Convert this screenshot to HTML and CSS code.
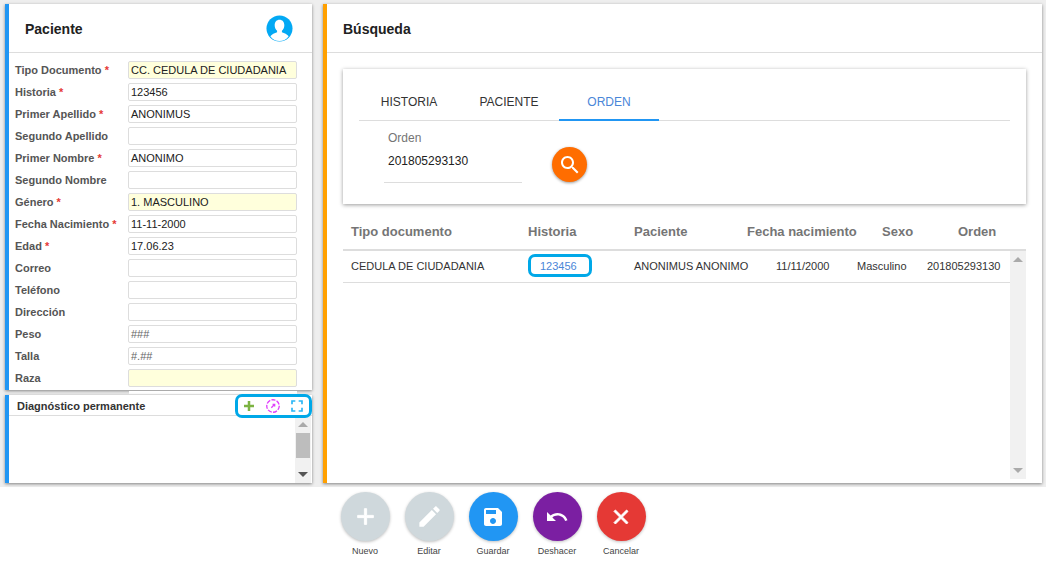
FILE: index.html
```html
<!DOCTYPE html>
<html lang="en">
<head>
  <meta charset="UTF-8">
  <meta name="viewport" content="width=device-width, initial-scale=1.0">
  <title>Búsqueda de paciente</title>
  <link rel="stylesheet" href="styles.css">
</head>
<body>
  <div class="workspace">
    <div class="left-col">
      <!-- Paciente -->
      <section class="panel panel-blue patient">
        <header class="panel-head">
          <h2>Paciente</h2>
          <svg class="avatar" viewBox="0 0 28 28">
            <circle cx="14" cy="14" r="13.5" fill="#03a9f4"/>
            <path d="M14 5c-3 0-5 2.300-5 5.500 0 2.500 1 4.600 2.500 5.800v1.500c-2.500 1-5.500 2-7 4.200C7 25.400 10.300 27 14 27s7-1.600 9.500-5c-1.500-2.200-4.500-3.200-7-4.200v-1.500c1.500-1.200 2.500-3.300 2.500-5.800C19 7.300 17 5 14 5z" fill="#fff"/>
          </svg>
        </header>
        <div class="fields">
          <div class="field"><label>Tipo Documento <b>*</b></label><div class="value req">CC. CEDULA DE CIUDADANIA</div></div>
          <div class="field"><label>Historia <b>*</b></label><div class="value">123456</div></div>
          <div class="field"><label>Primer Apellido <b>*</b></label><div class="value">ANONIMUS</div></div>
          <div class="field"><label>Segundo Apellido</label><div class="value"></div></div>
          <div class="field"><label>Primer Nombre <b>*</b></label><div class="value">ANONIMO</div></div>
          <div class="field"><label>Segundo Nombre</label><div class="value"></div></div>
          <div class="field"><label>Género <b>*</b></label><div class="value req">1. MASCULINO</div></div>
          <div class="field"><label>Fecha Nacimiento <b>*</b></label><div class="value">11-11-2000</div></div>
          <div class="field"><label>Edad <b>*</b></label><div class="value">17.06.23</div></div>
          <div class="field"><label>Correo</label><div class="value"></div></div>
          <div class="field"><label>Teléfono</label><div class="value"></div></div>
          <div class="field"><label>Dirección</label><div class="value"></div></div>
          <div class="field"><label>Peso</label><div class="value mask">###</div></div>
          <div class="field"><label>Talla</label><div class="value mask">#.##</div></div>
          <div class="field"><label>Raza</label><div class="value req"></div></div>
        </div>
      </section>
      <div class="panel-gap"><span></span></div>
      <!-- Diagnostico -->
      <section class="panel panel-blue diag">
        <header class="diag-head">
          <h3>Diagnóstico permanente</h3>
          <div class="diag-tools">
            <svg viewBox="0 0 24 24" class="tool-add"><path d="M18 13.500h-4.500V18h-3v-4.500H6v-3h4.500V6h3v4.500H18z"/></svg>
            <svg viewBox="0 0 24 24" class="tool-hist"><circle cx="12" cy="12" r="7.500" stroke-dasharray="5 1.500"/><path d="M10 14l4-4M11.500 10H14v2.500"/></svg>
            <svg viewBox="0 0 24 24" class="tool-full"><path d="M7 14H5v5h5v-2H7v-3zm-2-4h2V7h3V5H5v5zm12 7h-3v2h5v-5h-2v3zM14 5v2h3v3h2V5h-5z"/></svg>
          </div>
          <div class="callout callout-tools"></div>
        </header>
        <div class="diag-body">
          <div class="scrollbar">
            <i class="arrow-up"></i>
            <div class="thumb"></div>
            <i class="arrow-down"></i>
          </div>
        </div>
      </section>
    </div>

    <!-- Busqueda -->
    <section class="panel panel-orange search">
      <header class="panel-head">
        <h2>Búsqueda</h2>
      </header>
      <div class="search-body">
        <div class="card">
          <div class="tabs">
            <a class="tab">HISTORIA</a>
            <a class="tab">PACIENTE</a>
            <a class="tab active">ORDEN</a>
          </div>
          <div class="search-row">
            <div class="text-field">
              <label>Orden</label>
              <div class="text-value">201805293130</div>
            </div>
            <button class="search-btn">
              <svg viewBox="0 0 24 24"><path d="M15.500 14h-.79l-.28-.27C15.410 12.590 16 11.110 16 9.500 16 5.910 13.090 3 9.500 3S3 5.910 3 9.500 5.910 16 9.500 16c1.610 0 3.090-.59 4.230-1.570l.27.28v.79l5 4.990L20.490 19l-4.990-5zm-6 0C7.010 14 5 11.990 5 9.500S7.010 5 9.500 5 14 7.010 14 9.500 11.990 14 9.500 14z"/></svg>
            </button>
          </div>
        </div>
        <div class="results">
          <div class="results-head">
            <span class="h-tipo">Tipo documento</span>
            <span class="h-hist">Historia</span>
            <span class="h-pac">Paciente</span>
            <span class="h-fecha">Fecha nacimiento</span>
            <span class="h-sexo">Sexo</span>
            <span>Orden</span>
          </div>
          <div class="results-body">
            <div class="results-list">
              <div class="result-row">
                <span class="c-tipo">CEDULA DE CIUDADANIA</span>
                <span class="c-hist"><a>123456</a><i class="callout callout-link"></i></span>
                <span class="c-pac">ANONIMUS ANONIMO</span>
                <span class="c-fecha">11/11/2000</span>
                <span class="c-sexo">Masculino</span>
                <span>201805293130</span>
              </div>
            </div>
            <div class="scrollbar">
              <i class="arrow-up"></i>
              <i class="arrow-down"></i>
            </div>
          </div>
        </div>
      </div>
    </section>
  </div>

  <!-- Acciones -->
  <footer class="actions">
    <div class="action">
      <button class="fab fab-off"><svg viewBox="0 0 24 24"><path class="plus" d="M19 13h-6v6h-2v-6H5v-2h6V5h2v6h6v2z"/></svg></button>
      <span>Nuevo</span>
    </div>
    <div class="action">
      <button class="fab fab-off"><svg viewBox="0 0 24 24"><path d="M3 17.250V21h3.750L17.810 9.940l-3.750-3.750L3 17.250zM20.710 7.040c.39-.39.39-1.020 0-1.410l-2.340-2.340c-.39-.39-1.020-.39-1.410 0l-1.830 1.830 3.750 3.750 1.830-1.830z"/></svg></button>
      <span>Editar</span>
    </div>
    <div class="action">
      <button class="fab fab-save"><svg viewBox="0 0 24 24"><path d="M17 3H5c-1.110 0-2 .9-2 2v14c0 1.100.89 2 2 2h14c1.100 0 2-.9 2-2V7l-4-4zm-5 16c-1.660 0-3-1.340-3-3s1.340-3 3-3 3 1.340 3 3-1.340 3-3 3zm3-10H5V5h10v4z"/></svg></button>
      <span>Guardar</span>
    </div>
    <div class="action">
      <button class="fab fab-undo"><svg viewBox="0 0 24 24"><path d="M12.500 8c-2.650 0-5.050.99-6.900 2.600L2 7v9h9l-3.620-3.620c1.390-1.160 3.160-1.880 5.120-1.880 3.540 0 6.550 2.310 7.600 5.500l2.370-.78C21.080 11.030 17.150 8 12.500 8z"/></svg></button>
      <span>Deshacer</span>
    </div>
    <div class="action">
      <button class="fab fab-cancel"><svg viewBox="0 0 24 24"><path d="M19 6.410L17.590 5 12 10.590 6.410 5 5 6.410 10.590 12 5 17.590 6.410 19 12 13.410 17.590 19 19 17.590 13.410 12z"/></svg></button>
      <span>Cancelar</span>
    </div>
  </footer>
</body>
</html>
```

FILE: styles.css
```css
* {
  box-sizing: border-box;
}
html, body {
  margin: 0;
  padding: 0;
  height: 561px;
  overflow: hidden;
}
body {
  font-family: "Liberation Sans", Arial, sans-serif;
  background-color: #fff;
  color: #212121;
}
h2, h3 {
  margin: 0;
}
.workspace {
  display: flex;
  gap: 11px;
  height: 487px;
  padding: 4px 4px 4px 5px;
  background-color: #eee;
}
.left-col {
  width: 307px;
  display: flex;
  flex-direction: column;
}
.panel {
  background: #fff;
  box-shadow: 0 1px 3px rgba(0, 0, 0, 0.45);
}
.panel-blue {
  border-left: 4px solid #2196f3;
}
.panel-orange {
  border-left: 4px solid #ffa000;
}
.panel-head {
  height: 49px;
  padding-top: 1px;
  display: flex;
  align-items: center;
  justify-content: space-between;
  border-bottom: 1px solid #ddd;
}
.panel-head h2 {
  font-size: 14px;
  color: #212121;
}

/* Paciente */
.patient {
  height: 386px;
  overflow: hidden;
}
.patient .panel-head {
  padding: 0 19px 0 16px;
}
.patient h2 {
  padding-top: 1px;
}
.avatar {
  width: 27px;
  height: 27px;
}
.fields {
  padding: 8px 0 0 6px;
}
.field {
  display: flex;
  align-items: center;
  height: 18px;
  margin-bottom: 4px;
}
.field label {
  width: 113px;
  font-size: 11px;
  font-weight: bold;
  color: #555;
  white-space: nowrap;
}
.field label b {
  color: #e53935;
}
.value {
  width: 169px;
  height: 18px;
  padding-left: 2px;
  font-size: 11px;
  line-height: 16px;
  color: #212121;
  background: #fff;
  border: 1px solid #ddd;
  border-radius: 2px;
}
.value.req {
  background: #ffffdc;
}
.value.mask {
  color: #666;
}
.panel-gap {
  height: 5px;
  padding-left: 124px;
}
.panel-gap span {
  display: block;
  width: 168px;
  height: 3px;
  margin-top: 1px;
  background: #fff;
}

/* Diagnostico */
.diag {
  height: 88px;
  display: flex;
  flex-direction: column;
}
.diag-head {
  position: relative;
  height: 21px;
  padding: 1px 5px 0 8px;
  display: flex;
  align-items: center;
  justify-content: space-between;
  border-bottom: 1px solid #ddd;
}
.diag-head h3 {
  font-size: 11px;
  font-weight: bold;
  color: #333;
}
.diag-tools {
  display: flex;
  gap: 4px;
}
.diag-tools svg {
  display: block;
  width: 20px;
  height: 20px;
}
.tool-add {
  fill: #7cb342;
}
.tool-hist {
  fill: none;
  stroke: #e040fb;
  stroke-width: 1.6;
}
.tool-full {
  fill: #29b6f6;
}
.callout {
  position: absolute;
  border: 3px solid #00a8e8;
  border-radius: 7px;
}
.callout-tools {
  top: -1px;
  right: 0;
  width: 77px;
  height: 24px;
}
.diag-body {
  flex: 1;
  display: flex;
  justify-content: flex-end;
  padding-right: 1px;
}
.scrollbar {
  display: flex;
  flex-direction: column;
  align-items: center;
  justify-content: space-between;
  width: 16px;
  padding: 6px 0;
  background: #f1f1f1;
}
.thumb {
  width: 14px;
  height: 25px;
  margin-top: 6px;
  margin-bottom: auto;
  background: #bdbdbd;
}
.arrow-up, .arrow-down {
  width: 0;
  height: 0;
  border-left: 5px solid transparent;
  border-right: 5px solid transparent;
}
.arrow-up {
  border-bottom: 5px solid #aaa;
}
.arrow-down {
  border-top: 5px solid #555;
}
.results-body .arrow-down {
  border-top-color: #aaa;
}

/* Busqueda */
.search {
  flex: 1;
}
.search .panel-head {
  padding-left: 16px;
}
.search-body {
  padding: 16px 16px 0;
}
.card {
  height: 135px;
  padding: 16px 16px 0;
  background: #fff;
  box-shadow: 0 1px 4px rgba(0, 0, 0, 0.4);
}
.tabs {
  display: flex;
  height: 36px;
  border-bottom: 1px solid #ddd;
}
.tab {
  width: 100px;
  height: 36px;
  font-size: 12px;
  line-height: 34px;
  text-align: center;
  color: #333;
}
.tab.active {
  color: #4a86d8;
  border-bottom: 2px solid #2196f3;
}
.search-row {
  display: flex;
  padding-left: 25px;
}
.text-field {
  width: 138px;
  height: 62px;
  border-bottom: 1px solid #ddd;
  font-size: 12px;
}
.text-field label {
  display: block;
  margin: 10px 0 0 4px;
  color: #757575;
}
.text-value {
  margin: 9px 0 0 4px;
  color: #212121;
}
.search-btn {
  width: 35px;
  height: 35px;
  margin: 26px 0 0 30px;
  padding: 0;
  display: flex;
  align-items: center;
  justify-content: center;
  background: #ff6d00;
  border: none;
  border-radius: 50%;
  box-shadow: 0 1px 3px rgba(0, 0, 0, 0.4);
}
.search-btn svg {
  width: 24px;
  height: 24px;
  fill: #fff;
}
.results {
  margin-top: 11px;
}
.results-head {
  display: flex;
  align-items: center;
  height: 36px;
  padding-bottom: 2px;
  border-bottom: 2px solid #ddd;
  font-size: 13px;
  font-weight: bold;
  color: #757575;
}
.h-tipo {
  width: 185px;
  padding-left: 8px;
}
.h-hist {
  width: 106px;
}
.h-pac {
  width: 113px;
}
.h-fecha {
  width: 135px;
}
.h-sexo {
  width: 76px;
}
.results-body {
  display: flex;
  height: 228px;
}
.results-list {
  flex: 1;
}
.result-row {
  display: flex;
  align-items: center;
  height: 32px;
  padding-bottom: 2px;
  border-bottom: 1px solid #ddd;
  font-size: 11px;
  color: #333;
}
.c-tipo {
  width: 185px;
  padding-left: 8px;
}
.c-hist {
  position: relative;
  width: 106px;
  padding-left: 12px;
}
.c-hist a {
  color: #4a86d8;
}
.callout-link {
  top: -6px;
  left: 0;
  width: 64px;
  height: 23px;
}
.c-pac {
  width: 142px;
}
.c-fecha {
  width: 81px;
}
.c-sexo {
  width: 70px;
}

/* Acciones */
.actions {
  display: flex;
  justify-content: center;
  height: 74px;
  padding: 5px 60px 0 0;
  background: #fff;
}
.action {
  width: 64px;
  display: flex;
  flex-direction: column;
  align-items: center;
  font-size: 9px;
  color: #444;
}
.fab {
  width: 49px;
  height: 49px;
  margin-bottom: 5px;
  padding: 0;
  display: flex;
  align-items: center;
  justify-content: center;
  border: none;
  border-radius: 50%;
  box-shadow: 0 1px 3px rgba(0, 0, 0, 0.25);
}
.fab svg {
  width: 24px;
  height: 24px;
  fill: #fff;
}
.fab-off {
  background: #cfd8dc;
}
.fab-off svg {
  width: 27px;
  height: 27px;
}
.plus {
  stroke: #fff;
  stroke-width: 0.8;
}
.fab-save {
  background: #2196f3;
}
.fab-undo {
  background: #7b1fa2;
}
.fab-cancel {
  background: #e53935;
}
.fab-cancel svg {
  stroke: #fff;
  stroke-width: 1;
}
```
